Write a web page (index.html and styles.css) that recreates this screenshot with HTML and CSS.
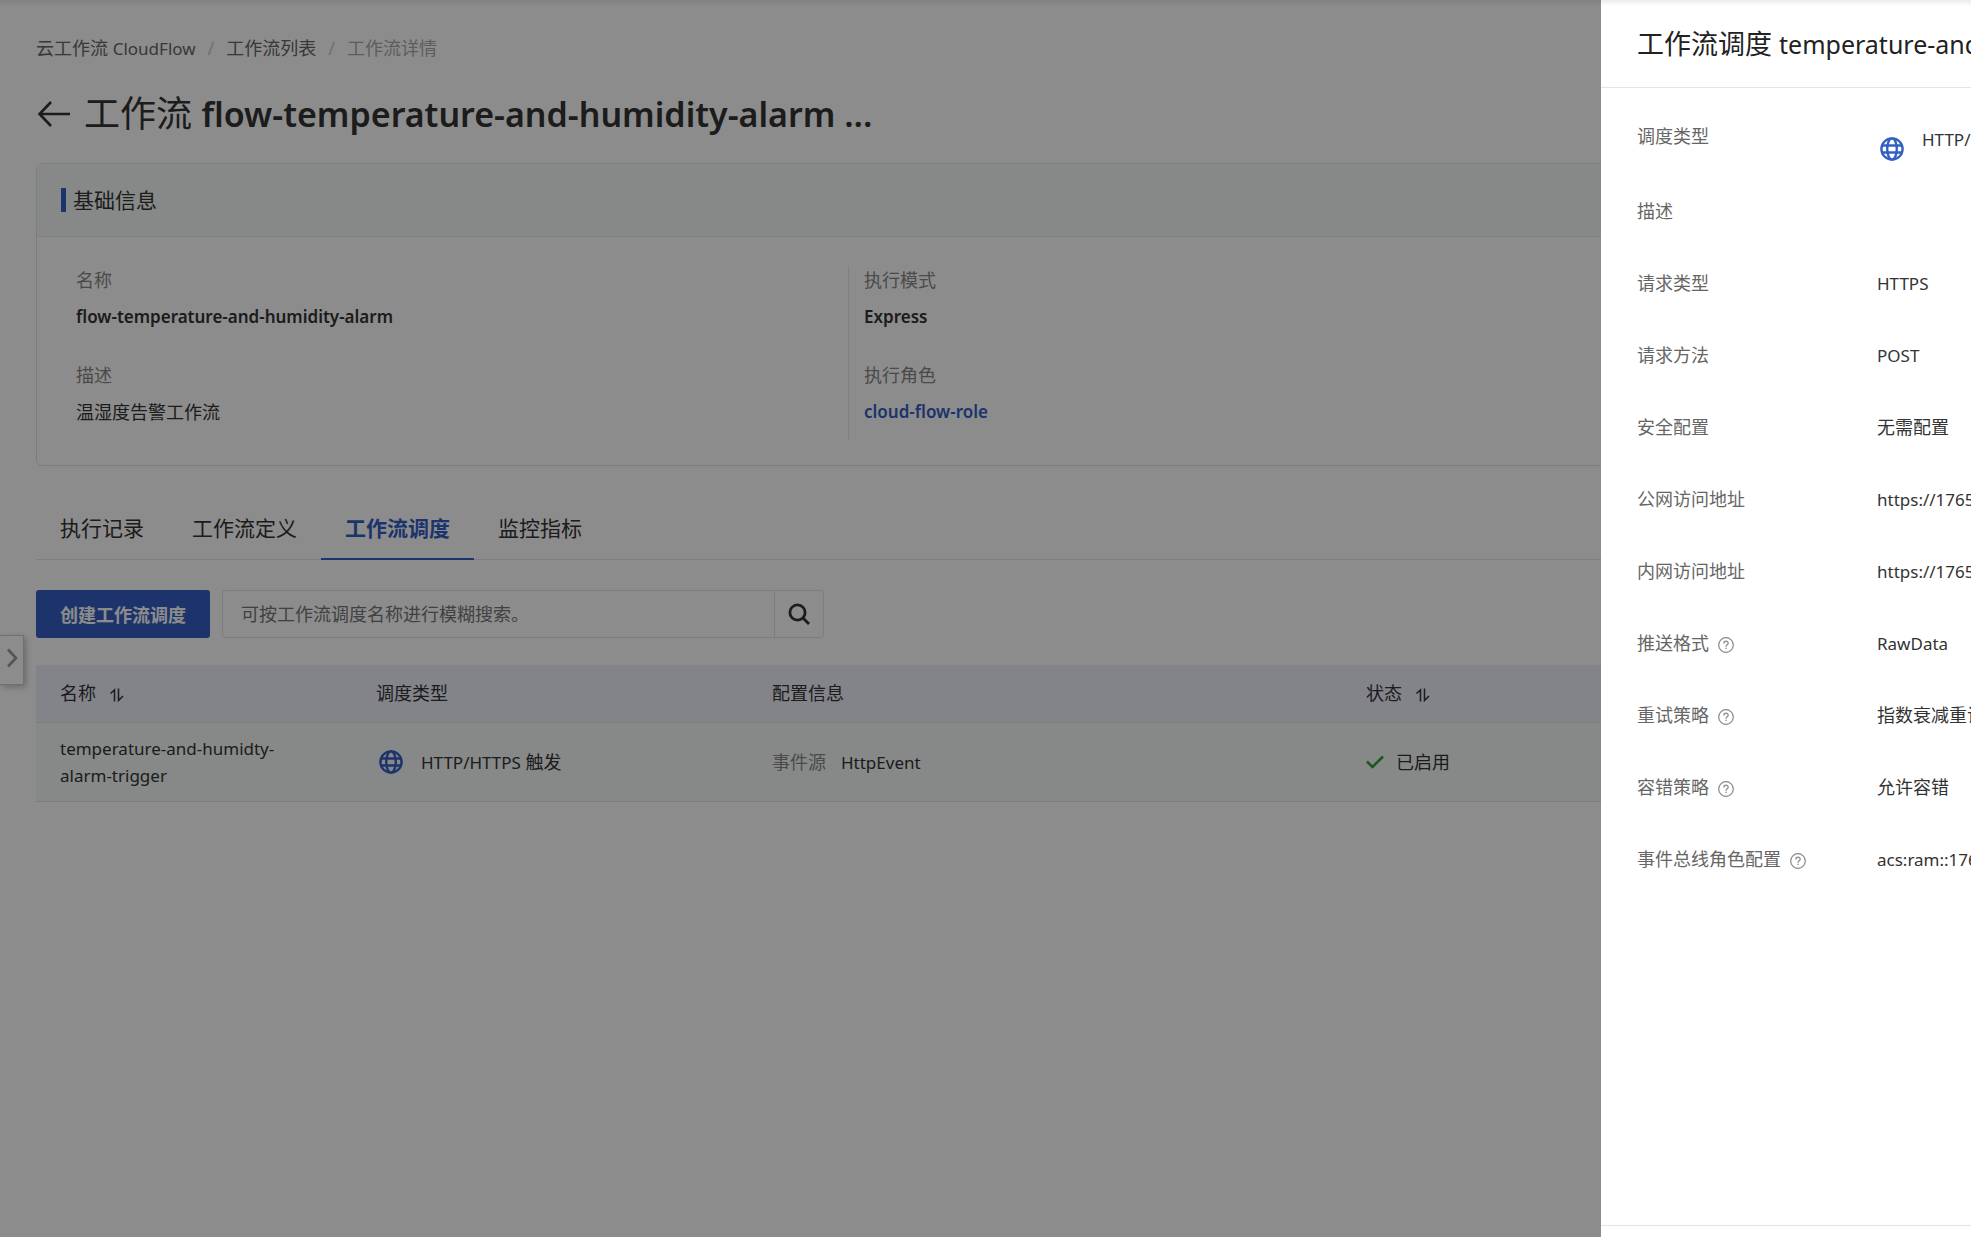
FILE: index.html
```html
<!DOCTYPE html>
<html lang="zh-CN">
<head>
  <meta charset="UTF-8">
  <title>工作流详情</title>
  <link rel="stylesheet" href="styles.css">
</head>
<body>
  <!-- Shared icons -->
  <svg class="sprite" aria-hidden="true">
    <symbol id="icon-globe" viewBox="0 0 24 24">
      <g fill="none" stroke="currentColor" stroke-width="2.400">
        <circle cx="12" cy="12" r="10.600"/>
        <ellipse cx="12" cy="12" rx="4.800" ry="10.600"/>
        <path d="M2 8.500h20M2 15.500h20"/>
      </g>
    </symbol>
    <symbol id="icon-sort" viewBox="0 0 16 16">
      <path d="M1.500 6.500 5.500 3v11.500M9.500 1.500V13.500l4.500-4.500" fill="none" stroke="currentColor" stroke-width="1.500"/>
    </symbol>
    <symbol id="icon-help" viewBox="0 0 16 16">
      <g fill="none" stroke="currentColor" stroke-width="1.200">
        <circle cx="8" cy="8" r="7.300"/>
        <path d="M5.800 6.500c0-3 4.400-3 4.400-.3 0 1.600-2.200 1.700-2.200 3.500M8 10.700v1.400"/>
      </g>
    </symbol>
  </svg>

  <main class="page">
    <nav class="breadcrumb">
      <a href="#">云工作流 <span class="latin">CloudFlow</span></a>
      <span class="slash">/</span>
      <a href="#">工作流列表</a>
      <span class="slash">/</span>
      <span class="current">工作流详情</span>
    </nav>

    <div class="title-row">
      <a href="#" class="back" aria-label="返回">
        <svg width="34" height="28" viewBox="0 0 34 28"><path d="M15 2 3.500 14 15 26M3.500 14H34" fill="none" stroke="currentColor" stroke-width="2.600"/></svg>
      </a>
      <h1>工作流 <span class="title-name">flow-temperature-and-humidity-alarm ...</span></h1>
    </div>

    <!-- Basic info -->
    <section class="card">
      <div class="card-head"><h2>基础信息</h2></div>
      <div class="card-body">
        <dl class="info">
          <dt>名称</dt>
          <dd class="strong">flow-temperature-and-humidity-alarm</dd>
          <dt>描述</dt>
          <dd>温湿度告警工作流</dd>
        </dl>
        <dl class="info divided">
          <dt>执行模式</dt>
          <dd class="strong">Express</dd>
          <dt>执行角色</dt>
          <dd class="strong"><a href="#">cloud-flow-role</a></dd>
        </dl>
      </div>
    </section>

    <!-- Tabs -->
    <div class="tabs" role="tablist">
      <button type="button" class="tab" role="tab">执行记录</button>
      <button type="button" class="tab" role="tab">工作流定义</button>
      <button type="button" class="tab active" role="tab" aria-selected="true">工作流调度</button>
      <button type="button" class="tab" role="tab">监控指标</button>
    </div>

    <div class="toolbar">
      <button type="button" class="btn-primary">创建工作流调度</button>
      <form class="search">
        <input type="text" aria-label="搜索" placeholder="可按工作流调度名称进行模糊搜索。">
        <button type="button" aria-label="搜索">
          <svg width="22" height="22" viewBox="0 0 22 22"><g fill="none" stroke="currentColor" stroke-width="2.800"><circle cx="9.500" cy="9.500" r="7.600"/><path d="m15 15 6 6"/></g></svg>
        </button>
      </form>
    </div>

    <table class="grid">
      <thead>
        <tr>
          <th class="col-name">名称<svg class="sort"><use href="#icon-sort"/></svg></th>
          <th class="col-type">调度类型</th>
          <th class="col-config">配置信息</th>
          <th>状态<svg class="sort"><use href="#icon-sort"/></svg></th>
        </tr>
      </thead>
      <tbody>
        <tr>
          <td><div class="name latin">temperature-and-humidty-alarm-trigger</div></td>
          <td>
            <div class="trigger">
              <svg class="globe"><use href="#icon-globe"/></svg>
              <span><span class="latin">HTTP/HTTPS</span> 触发</span>
            </div>
          </td>
          <td><span class="muted">事件源</span><span class="latin event">HttpEvent</span></td>
          <td>
            <div class="status">
              <svg width="18" height="14" viewBox="0 0 18 14"><path d="m1 6.500 5.500 5.500L17 1.500" fill="none" stroke="currentColor" stroke-width="2.600"/></svg>
              <span>已启用</span>
            </div>
          </td>
        </tr>
      </tbody>
    </table>
  </main>

  <button type="button" class="expand" aria-label="展开">
    <svg width="12" height="20" viewBox="0 0 12 20"><path d="m2 1.500 8 8.500-8 8.500" fill="none" stroke="currentColor" stroke-width="2.600"/></svg>
  </button>

  <div class="overlay"></div>

  <!-- Schedule detail drawer -->
  <aside class="drawer">
    <header class="drawer-head">
      <h2>工作流调度 <span class="drawer-name">temperature-and-humidty-alarm-trigger</span></h2>
    </header>
    <dl class="details">
      <div class="row row-type">
        <dt>调度类型</dt>
        <dd class="trigger">
          <svg class="globe"><use href="#icon-globe"/></svg>
          <span><span class="latin">HTTP/HTTPS</span> 触发</span>
        </dd>
      </div>
      <div class="row"><dt>描述</dt><dd></dd></div>
      <div class="row"><dt>请求类型</dt><dd class="latin">HTTPS</dd></div>
      <div class="row"><dt>请求方法</dt><dd class="latin">POST</dd></div>
      <div class="row"><dt>安全配置</dt><dd>无需配置</dd></div>
      <div class="row"><dt>公网访问地址</dt><dd class="latin">https://1765</dd></div>
      <div class="row"><dt>内网访问地址</dt><dd class="latin">https://1765</dd></div>
      <div class="row"><dt>推送格式<svg class="help"><use href="#icon-help"/></svg></dt><dd class="latin">RawData</dd></div>
      <div class="row"><dt>重试策略<svg class="help"><use href="#icon-help"/></svg></dt><dd>指数衰减重试</dd></div>
      <div class="row"><dt>容错策略<svg class="help"><use href="#icon-help"/></svg></dt><dd>允许容错</dd></div>
      <div class="row"><dt>事件总线角色配置<svg class="help"><use href="#icon-help"/></svg></dt><dd class="latin">acs:ram::1765</dd></div>
    </dl>
    <footer class="drawer-foot"></footer>
  </aside>

  <div class="top-shadow"></div>
</body>
</html>
```
FILE: styles.css
```css
* {
  box-sizing: border-box;
}

body {
  margin: 0;
  font-family: "Noto Sans", "Noto Sans CJK SC", sans-serif;
  font-size: 18px;
  line-height: 27px;
  color: #333;
  background: #fff;
  overflow: hidden;
}

h1, h2, dl, dd {
  margin: 0;
  font-weight: 400;
}

a {
  color: inherit;
  text-decoration: none;
}

button, input {
  font-family: inherit;
  font-size: 18px;
  color: inherit;
}

svg {
  display: block;
  flex: none;
}

.sprite {
  position: absolute;
  width: 0;
  height: 0;
}

.latin {
  font-size: 17px;
}

.page {
  padding: 35px 36px 0;
}

/* Heading */
.breadcrumb {
  display: flex;
  gap: 12px;
  height: 27px;
  color: #666;
}

.slash {
  color: #ccc;
}

.current {
  color: #aaa;
}

.title-row {
  display: flex;
  align-items: center;
  gap: 14px;
  margin-top: 26px;
  color: #333;
}

h1 {
  font-size: 36px;
  line-height: 52px;
}

.title-name {
  font-size: 34px;
  font-weight: 600;
}

/* Basic info */
.card {
  margin-top: 23px;
  border: 1px solid #e3e4e6;
  border-radius: 6px;
}

.card-head {
  display: flex;
  align-items: center;
  height: 73px;
  padding: 0 24px;
  background: #f6faf8;
  border-bottom: 1px solid #e9eaec;
}

.card-head h2 {
  padding-left: 7px;
  border-left: 5px solid #3460c4;
  font-size: 21px;
  line-height: 24px;
}

.card-body {
  display: flex;
  padding: 29px 39px 25px;
}

.info {
  flex: 0 0 772px;
  height: 174px;
}

.info.divided {
  padding-left: 15px;
  border-left: 1px solid #e9eaec;
}

.info dt {
  color: #888;
  line-height: 28px;
}

.info dd {
  margin: 9px 0 30px;
  line-height: 28px;
}

.info .strong {
  font-size: 17px;
  font-weight: 600;
}

.info a {
  color: #3460c4;
}

/* Tabs */
.tabs {
  display: flex;
  height: 60px;
  margin-top: 34px;
  border-bottom: 1px solid #e3e4e6;
}

.tab {
  height: 60px;
  padding: 0 24px 4px;
  border: 0;
  border-bottom: 2px solid transparent;
  background: none;
  font-size: 21px;
}

.tab.active {
  color: #3460c4;
  border-color: #3460c4;
  font-weight: 700;
}

.toolbar {
  display: flex;
  gap: 12px;
  margin: 30px 0 27px;
}

.btn-primary {
  height: 48px;
  padding: 0 24px;
  border: 0;
  border-radius: 3px;
  background: #3460c4;
  color: #fff;
  font-weight: 700;
}

.search {
  display: flex;
  width: 602px;
  height: 48px;
  border: 1px solid #e3e4e6;
  border-radius: 3px;
}

.search input {
  flex: 1;
  padding: 0 18px;
  border: 0;
  outline: 0;
  background: none;
}

.search input::placeholder {
  color: #777;
  opacity: 1;
}

.search button {
  display: flex;
  align-items: center;
  justify-content: center;
  width: 49px;
  padding: 0;
  border: 0;
  border-left: 1px solid #e3e4e6;
  background: none;
}

/* Schedules table */
.grid {
  width: 100%;
  table-layout: fixed;
  border-collapse: separate;
  border-spacing: 0;
}

.grid th,
.grid td {
  padding: 0 24px;
  border-bottom: 1px solid #e3e4e6;
  text-align: left;
  font-weight: 400;
}

.grid th {
  height: 58px;
  background: #eff0f9;
}

.grid td {
  height: 79px;
  background: #f6faf8;
}

.col-name {
  width: 316px;
}

.col-type {
  width: 396px;
}

.col-config {
  width: 594px;
}

.name {
  max-width: 240px;
}

.sort {
  display: inline-block;
  width: 16px;
  height: 16px;
  margin-left: 13px;
  vertical-align: -3px;
}

.trigger {
  display: flex;
  align-items: center;
  gap: 18px;
  padding-left: 3px;
}

.globe {
  width: 24px;
  height: 24px;
  color: #3460c4;
}

.muted {
  color: #888;
}

.event {
  margin-left: 15px;
}

.status {
  display: flex;
  align-items: center;
  gap: 12px;
}

.status svg {
  color: #35a035;
}

/* Side menu handle */
.expand {
  position: fixed;
  top: 635px;
  left: 0;
  display: flex;
  align-items: center;
  justify-content: center;
  width: 24px;
  height: 50px;
  padding: 0 0 4px;
  border: 1px solid #ccc;
  border-left: 0;
  background: #fff;
  box-shadow: 2px 2px 6px rgba(0, 0, 0, 0.25);
  color: #999;
}

.overlay {
  position: fixed;
  inset: 0;
  background: rgba(0, 0, 0, 0.45);
}

/* Drawer */
.drawer {
  position: fixed;
  top: 0;
  right: 0;
  bottom: 0;
  display: flex;
  flex-direction: column;
  width: 370px;
  background: #fff;
  overflow: hidden;
  white-space: nowrap;
}

.drawer-head {
  padding: 23px 36px;
  border-bottom: 1px solid #e3e4e6;
}

.drawer-head h2 {
  font-size: 27px;
  line-height: 41px;
  color: #222;
}

.drawer-name {
  font-size: 25px;
  line-height: 1;
}

.details {
  flex: 1;
  padding: 35px 36px 0;
}

.row {
  display: flex;
  height: 72px;
}

.row-type {
  height: 75px;
}

.row dt {
  display: flex;
  align-items: center;
  flex: 0 0 240px;
  height: 27px;
  color: #666;
}

.row .trigger {
  align-items: flex-start;
  height: 40px;
  padding-top: 3px;
}

.row .globe {
  margin-top: 11px;
}

.help {
  width: 16px;
  height: 16px;
  margin: 2px 0 0 9px;
  color: #888;
}

.drawer-foot {
  height: 12px;
  border-top: 1px solid #e3e4e6;
}

.top-shadow {
  position: fixed;
  top: 0;
  left: 0;
  right: 0;
  height: 6px;
  background: linear-gradient(rgba(0, 0, 0, 0.08), transparent);
}
```
